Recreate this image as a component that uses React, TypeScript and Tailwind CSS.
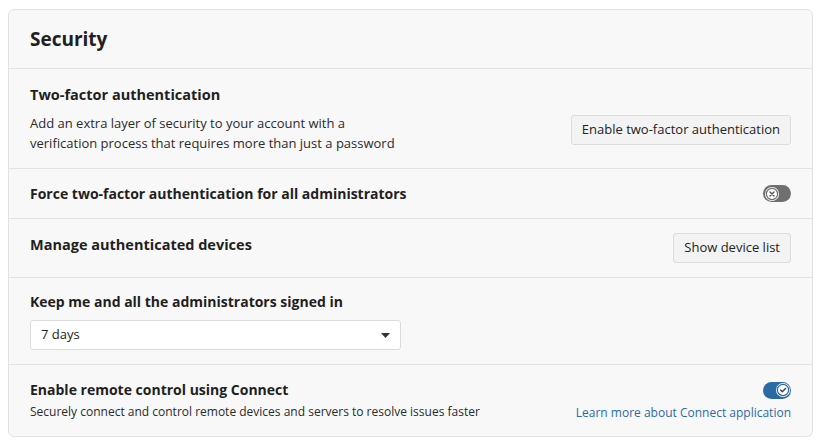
import React from "react";

function Toggle({ on }: { on: boolean }) {
  return (
    <div
      className={`flex h-[17px] w-[28px] items-center rounded-full px-[1.5px] ${
        on ? "justify-end bg-[#2c6aa5]" : "justify-start bg-[#6f6f6f]"
      }`}
    >
      <div className="flex h-[14px] w-[14px] items-center justify-center rounded-full bg-white">
        {on ? (
          <svg width="14" height="14" viewBox="0 0 14 14">
            <circle cx="7" cy="7" r="5.6" fill="none" stroke="#2c6aa5" strokeWidth="1.2" />
            <path d="M4.6 7.1 L6.3 8.8 L9.5 5.4" fill="none" stroke="#3a3f4a" strokeWidth="1.4" strokeLinecap="round" strokeLinejoin="round" />
          </svg>
        ) : (
          <svg width="14" height="14" viewBox="0 0 14 14">
            <circle cx="7" cy="7" r="5.6" fill="none" stroke="#6f6f6f" strokeWidth="1.2" />
            <path d="M5 5 L9 9 M9 5 L5 9" fill="none" stroke="#4a4f5a" strokeWidth="1.4" strokeLinecap="round" />
          </svg>
        )}
      </div>
    </div>
  );
}

function Button({ children }: { children: React.ReactNode }) {
  return (
    <button className="h-[30px] rounded-[3px] border border-[#dcdcdc] bg-[#f3f3f3] px-[10px] text-[13px] text-[#222]">
      {children}
    </button>
  );
}

export default function App() {
  return (
    <div
      className="min-h-[446px] bg-white px-[8px] pt-[9px] text-[#1f1f1f]"
      style={{ fontFamily: '"Open Sans", "Noto Sans", sans-serif' }}
    >
      <div className="w-[805px] rounded-[6px] border border-[#e2e2e2] bg-[#f8f8f8]">
        <div className="flex h-[59px] items-center border-b border-[#e2e2e2] px-[21px]">
          <h1 className="text-[19px] font-bold text-[#202020]">Security</h1>
        </div>

        <div className="flex h-[100px] items-center justify-between border-b border-[#e2e2e2] px-[21px]">
          <div>
            <div className="text-[14.5px] font-bold leading-[20px]">Two-factor authentication</div>
            <div className="mt-[8px] w-[380px] text-[13px] leading-[20px] text-[#2a2a2a]">
              Add an extra layer of security to your account with a<br />
              verification process that requires more than just a password
            </div>
          </div>
          <div className="mt-[22px]">
            <Button>Enable two-factor authentication</Button>
          </div>
        </div>

        <div className="flex h-[50px] items-center justify-between border-b border-[#e2e2e2] px-[21px]">
          <div className="text-[14px] font-bold">Force two-factor authentication for all administrators</div>
          <Toggle on={false} />
        </div>

        <div className="flex h-[59px] items-center justify-between border-b border-[#e2e2e2] px-[21px]">
          <div className="-mt-[6px] text-[14.5px] font-bold">Manage authenticated devices</div>
          <Button>Show device list</Button>
        </div>

        <div className="flex h-[87px] flex-col justify-center border-b border-[#e2e2e2] px-[21px]">
          <div className="text-[14px] font-bold leading-[20px]">Keep me and all the administrators signed in</div>
          <div className="mt-[8px] flex h-[30px] w-[371px] items-center justify-between rounded-[3px] border border-[#dcdcdc] bg-white pl-[10px] pr-[10px]">
            <span className="text-[13px] text-[#222]">7 days</span>
            <svg width="9" height="5" viewBox="0 0 9 5">
              <path d="M0 0 L9 0 L4.5 5 Z" fill="#333" />
            </svg>
          </div>
        </div>

        <div className="flex h-[71px] items-center justify-between px-[21px]">
          <div>
            <div className="text-[14px] font-bold leading-[20px]">Enable remote control using Connect</div>
            <div className="mt-[3px] text-[12px] leading-[18px] text-[#2a2a2a]">
              Securely connect and control remote devices and servers to resolve issues faster
            </div>
          </div>
          <div className="flex flex-col items-end">
            <div className="mt-[2px]">
              <Toggle on={true} />
            </div>
            <a className="mt-[5px] text-[12px] leading-[18px] text-[#2c6aa5]">Learn more about Connect application</a>
          </div>
        </div>
      </div>
    </div>
  );
}
